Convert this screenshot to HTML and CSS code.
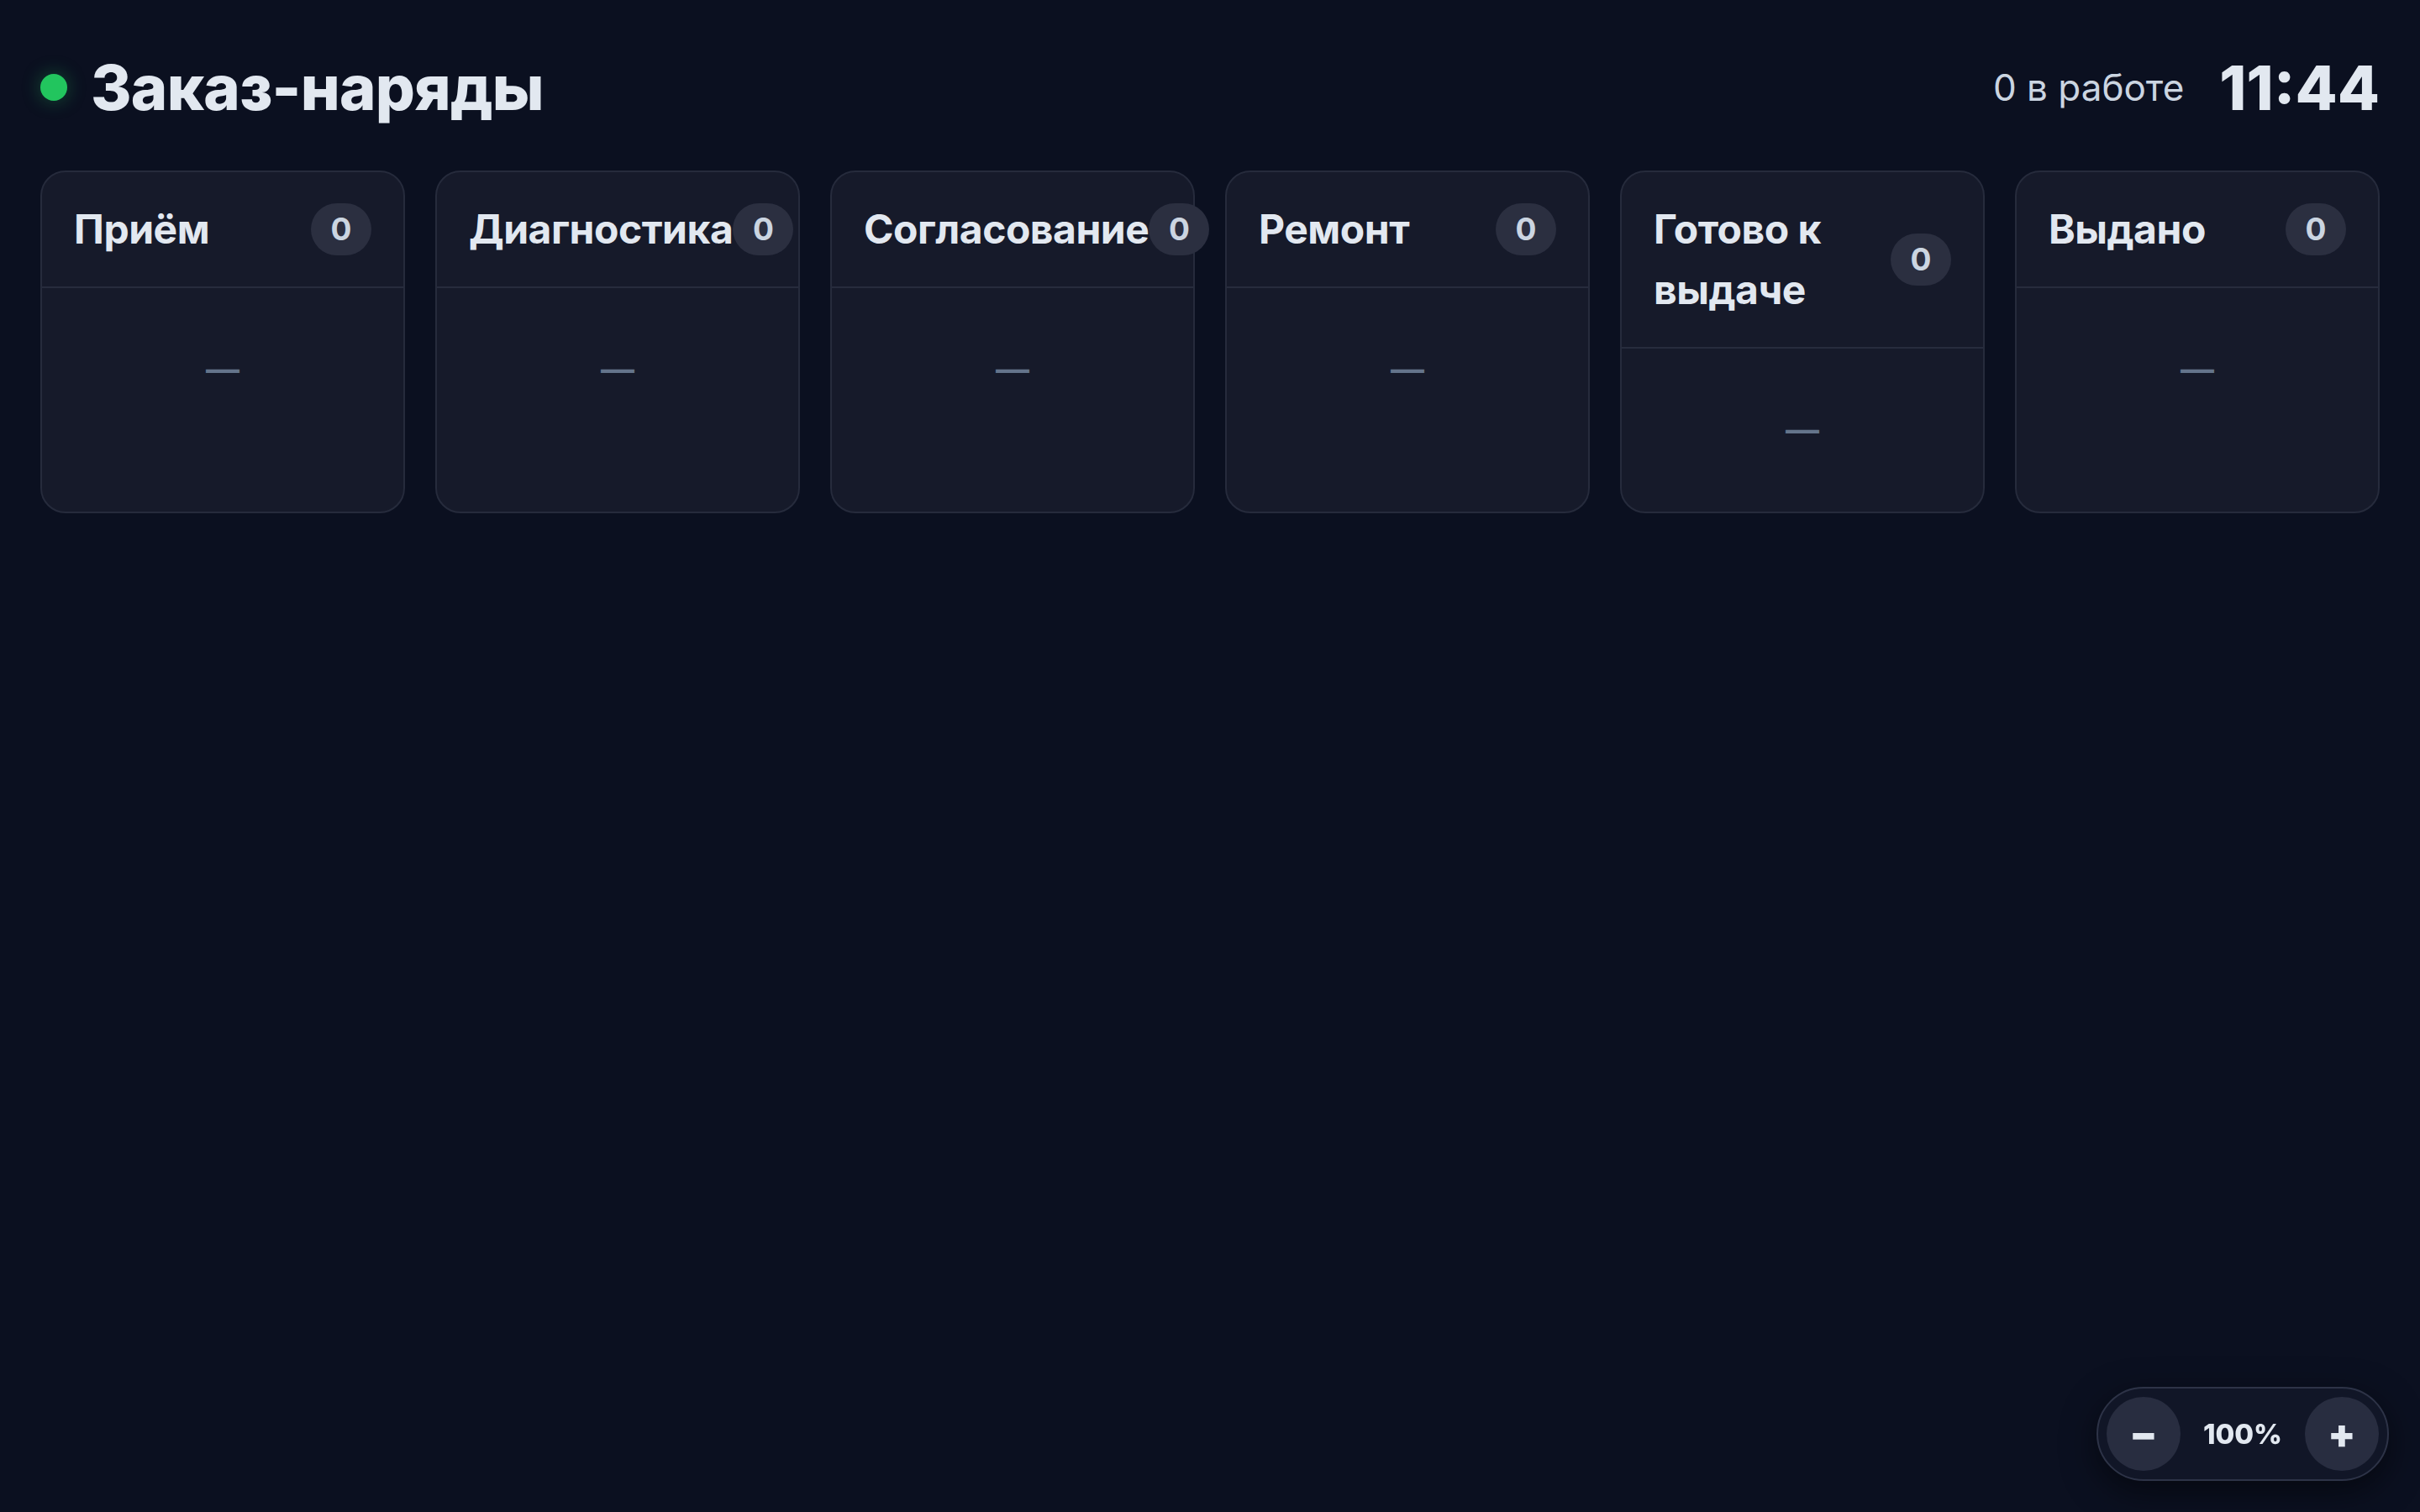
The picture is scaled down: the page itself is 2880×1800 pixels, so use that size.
FILE: index.html
```html
<!DOCTYPE html>
<html lang="ru">
<head>
<meta charset="utf-8">
<title>Заказ-наряды</title>
<link rel="stylesheet" href="styles.css">
</head>
<body>
<div class="app">
  <header class="topbar">
    <div class="brand">
      <span class="live-dot"></span>
      <h1 class="page-title">Заказ-наряды</h1>
    </div>
    <div class="status">
      <span class="in-work">0 в работе</span>
      <span class="clock">11:44</span>
    </div>
  </header>

  <main class="board">
    <section class="column">
      <div class="column-head"><h2 class="column-title">Приём</h2><span class="count">0</span></div>
      <div class="column-body"><span class="empty">—</span></div>
    </section>
    <section class="column">
      <div class="column-head"><h2 class="column-title">Диагностика</h2><span class="count">0</span></div>
      <div class="column-body"><span class="empty">—</span></div>
    </section>
    <section class="column">
      <div class="column-head"><h2 class="column-title">Согласование</h2><span class="count">0</span></div>
      <div class="column-body"><span class="empty">—</span></div>
    </section>
    <section class="column">
      <div class="column-head"><h2 class="column-title">Ремонт</h2><span class="count">0</span></div>
      <div class="column-body"><span class="empty">—</span></div>
    </section>
    <section class="column">
      <div class="column-head"><h2 class="column-title">Готово к выдаче</h2><span class="count">0</span></div>
      <div class="column-body"><span class="empty">—</span></div>
    </section>
    <section class="column">
      <div class="column-head"><h2 class="column-title">Выдано</h2><span class="count">0</span></div>
      <div class="column-body"><span class="empty">—</span></div>
    </section>
  </main>

  <div class="zoom-control">
    <button class="zoom-btn" type="button">−</button>
    <span class="zoom-value">100%</span>
    <button class="zoom-btn" type="button">+</button>
  </div>
</div>
</body>
</html>
```

FILE: styles.css
```css
* {
  box-sizing: border-box;
}

html, body {
  margin: 0;
  padding: 0;
  background: #0b1020;
  color: #e2e8f0;
  font-family: Inter, "Noto Sans", "Liberation Sans", sans-serif;
}

.app {
  min-height: 100vh;
  padding: 60px 48px 48px;
}

.topbar {
  display: flex;
  align-items: center;
  justify-content: space-between;
  margin-bottom: 54px;
}

.brand {
  display: flex;
  align-items: center;
  gap: 28px;
}

.live-dot {
  width: 32px;
  height: 32px;
  border-radius: 50%;
  background: #22c55e;
  box-shadow: 0 0 22px rgba(34, 197, 94, 0.35);
}

.page-title {
  margin: 0;
  font-size: 74px;
  line-height: 1.2;
  font-weight: 800;
  letter-spacing: -0.01em;
  color: #e2e8f0;
}

.status {
  display: flex;
  align-items: center;
  gap: 42px;
}

.in-work {
  font-size: 44px;
  line-height: 1.2;
  color: #cbd5e1;
}

.clock {
  font-size: 73px;
  line-height: 1.2;
  font-weight: 800;
  color: #e2e8f0;
}

.board {
  display: grid;
  grid-template-columns: repeat(6, minmax(0, 1fr));
  gap: 36px;
  align-items: stretch;
}

.column {
  display: flex;
  flex-direction: column;
  min-width: 0;
  background: #161a2a;
  border: 2px solid #262b3c;
  border-radius: 30px;
}

.column-head {
  display: flex;
  align-items: center;
  justify-content: space-between;
  padding: 32px 38px;
  border-bottom: 2px solid #272c3d;
}

.column-title {
  margin: 0;
  font-size: 48px;
  line-height: 72px;
  font-weight: 700;
  letter-spacing: -0.01em;
  color: #e2e8f0;
}

.count {
  flex-shrink: 0;
  min-width: 72px;
  height: 62px;
  padding: 0 20px;
  border-radius: 31px;
  background: #2b2f40;
  color: #cbd5e1;
  font-size: 37px;
  line-height: 62px;
  font-weight: 700;
  text-align: center;
}

.column-body {
  flex: 1;
  padding: 63px 20px;
  text-align: center;
}

.empty {
  font-size: 40px;
  line-height: 68px;
  font-weight: 600;
  color: #64748b;
}

.zoom-control {
  position: fixed;
  right: 37px;
  bottom: 37px;
  display: flex;
  align-items: center;
  padding: 10px;
  background: #111627;
  border: 2px solid #2d3347;
  border-radius: 999px;
  box-shadow: 0 12px 40px rgba(0, 0, 0, 0.5);
}

.zoom-btn {
  width: 88px;
  height: 88px;
  border: none;
  border-radius: 50%;
  background: #282d40;
  color: #e2e8f0;
  font-family: Inter, "Noto Sans", sans-serif;
  font-size: 48px;
  font-weight: 900;
  line-height: 88px;
  padding: 0;
}

.zoom-value {
  width: 148px;
  text-align: center;
  font-size: 33px;
  font-weight: 800;
  color: #e2e8f0;
}
```
